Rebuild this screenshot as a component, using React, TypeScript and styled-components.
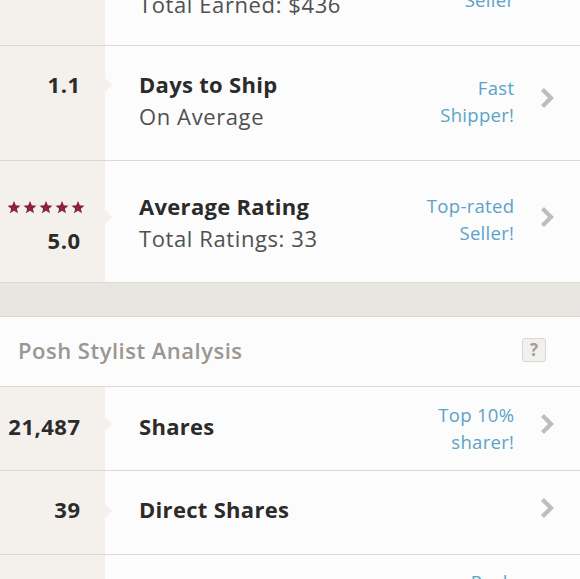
import React from "react";
import styled, { createGlobalStyle } from "styled-components";

const GlobalStyle = createGlobalStyle`
  html, body { margin: 0; padding: 0; background: #fcfcfc; }
  body { font-family: "Open Sans", "Liberation Sans", sans-serif; -webkit-font-smoothing: antialiased; }
  * { box-sizing: border-box; }
`;

const Screen = styled.div`
  width: 580px;
  height: 579px;
  overflow: hidden;
  background: #fcfcfc;
  display: flex;
  flex-direction: column;
`;

const Row = styled.div<{ $h?: number }>`
  display: flex;
  flex: ${(p) => (p.$h ? "none" : "1")};
  height: ${(p) => (p.$h ? `${p.$h}px` : "auto")};
  border-bottom: 1px solid #dcd9d5;
  background: #fcfcfc;
`;

const StatCol = styled.div<{ $top: number; $notch?: number }>`
  position: relative;
  width: 105px;
  flex: none;
  background: #f4f1ec;
  display: flex;
  flex-direction: column;
  align-items: flex-end;
  padding: ${(p) => p.$top}px 25px 0 0;
  &::after {
    content: "";
    display: ${(p) => (p.$notch === undefined ? "none" : "block")};
    position: absolute;
    left: 100%;
    top: ${(p) => (p.$notch ?? 0) - 7}px;
    border-left: 7px solid #f4f1ec;
    border-top: 7px solid transparent;
    border-bottom: 7px solid transparent;
  }
`;

const StatNumber = styled.div<{ $mt?: number }>`
  margin-top: ${(p) => p.$mt ?? 0}px;
  margin-right: -0.5px;
  font-size: 22px;
  line-height: 32px;
  font-weight: 700;
  letter-spacing: 0.5px;
  color: #2b2b2b;
`;

const Stars = styled.div`
  display: flex;
  gap: 2px;
  margin-right: -5px;
`;

const Body = styled.div`
  flex: 1;
  display: flex;
  align-items: flex-start;
  padding: 0 26px 0 34px;
`;

const TextBlock = styled.div<{ $top: number }>`
  flex: 1;
  margin-top: ${(p) => p.$top}px;
`;

const Title = styled.div`
  font-size: 22px;
  line-height: 32px;
  font-weight: 700;
  letter-spacing: 0.3px;
  color: #2b2b2b;
`;

const Subtitle = styled.div`
  font-size: 22px;
  line-height: 32px;
  font-weight: 400;
  letter-spacing: 0.6px;
  color: #505050;
`;

const Badge = styled.div<{ $top: number }>`
  margin-top: ${(p) => p.$top}px;
  margin-right: -0.3px;
  text-align: right;
  font-size: 18.5px;
  line-height: 27px;
  letter-spacing: 0.3px;
  color: #5ba3c7;
`;

const ChevronWrap = styled.div<{ $top: number; $hidden?: boolean }>`
  width: 14px;
  height: 22px;
  margin-left: 26px;
  margin-top: ${(p) => p.$top}px;
  visibility: ${(p) => (p.$hidden ? "hidden" : "visible")};
  flex: none;
`;

const Band = styled.div`
  height: 34px;
  flex: none;
  background: #e9e6e1;
  border-bottom: 1px solid #dad7d2;
`;

const Header = styled.div`
  height: 70px;
  flex: none;
  display: flex;
  align-items: flex-start;
  padding: 0 34px 0 18px;
  border-bottom: 1px solid #dcd9d5;
  background: #fcfcfc;
`;

const HeaderTitle = styled.div`
  flex: 1;
  margin-top: 17px;
  font-size: 22px;
  line-height: 32px;
  font-weight: 600;
  letter-spacing: 0.5px;
  color: #9b9691;
`;

const HelpBox = styled.div`
  margin-top: 21px;
  width: 24px;
  height: 24px;
  border: 1px solid #dad7d3;
  border-radius: 3px;
  background: #f2f0ed;
  color: #a19c97;
  font-size: 17px;
  line-height: 22px;
  font-weight: 700;
  display: flex;
  align-items: center;
  justify-content: center;
`;

const Chevron = ({ top, hidden }: { top: number; hidden?: boolean }) => (
  <ChevronWrap $top={top} $hidden={hidden}>
    <svg width="14" height="22" viewBox="0 0 14 22">
      <polyline points="2.5,2.5 11,11 2.5,19.5" fill="none" stroke="#bdbdbd" strokeWidth="4.2" />
    </svg>
  </ChevronWrap>
);

const Star = () => (
  <svg width="14" height="13" viewBox="0 0 24 23">
    <path d="M12 0l3.2 7.6 8.3.6-6.4 5.4 2 8.1L12 17.3l-7.1 4.4 2-8.1L.5 8.2l8.3-.6z" fill="#8b2336" />
  </svg>
);

export default function App() {
  return (
    <>
      <GlobalStyle />
      <Screen>
        <Row $h={46}>
          <StatCol $top={0} />
          <Body>
            <TextBlock $top={-12}>
              <Subtitle>Total Earned: $436</Subtitle>
            </TextBlock>
            <Badge $top={-14}>Seller</Badge>
            <Chevron top={0} hidden />
          </Body>
        </Row>

        <Row $h={115}>
          <StatCol $top={22} $notch={39}>
            <StatNumber>1.1</StatNumber>
          </StatCol>
          <Body>
            <TextBlock $top={22}>
              <Title>Days to Ship</Title>
              <Subtitle>On Average</Subtitle>
            </TextBlock>
            <Badge $top={28}>
              Fast
              <br />
              Shipper!
            </Badge>
            <Chevron top={41} />
          </Body>
        </Row>

        <Row $h={122}>
          <StatCol $top={40} $notch={56}>
            <Stars>
              <Star />
              <Star />
              <Star />
              <Star />
              <Star />
            </Stars>
            <StatNumber $mt={10}>5.0</StatNumber>
          </StatCol>
          <Body>
            <TextBlock $top={29}>
              <Title>Average Rating</Title>
              <Subtitle>Total Ratings: 33</Subtitle>
            </TextBlock>
            <Badge $top={31}>
              Top-rated
              <br />
              Seller!
            </Badge>
            <Chevron top={45} />
          </Body>
        </Row>

        <Band />

        <Header>
          <HeaderTitle>Posh Stylist Analysis</HeaderTitle>
          <HelpBox>?</HelpBox>
        </Header>

        <Row $h={84}>
          <StatCol $top={23} $notch={37}>
            <StatNumber>21,487</StatNumber>
          </StatCol>
          <Body>
            <TextBlock $top={23}>
              <Title>Shares</Title>
            </TextBlock>
            <Badge $top={14}>
              Top 10%
              <br />
              sharer!
            </Badge>
            <Chevron top={26} />
          </Body>
        </Row>

        <Row $h={84}>
          <StatCol $top={22} $notch={40}>
            <StatNumber>39</StatNumber>
          </StatCol>
          <Body>
            <TextBlock $top={22}>
              <Title>Direct Shares</Title>
            </TextBlock>
            <Chevron top={26} />
          </Body>
        </Row>

        <Row>
          <StatCol $top={0} />
          <Body>
            <TextBlock $top={0} />
            <Badge $top={13}>Posh</Badge>
            <Chevron top={26} />
          </Body>
        </Row>
      </Screen>
    </>
  );
}
